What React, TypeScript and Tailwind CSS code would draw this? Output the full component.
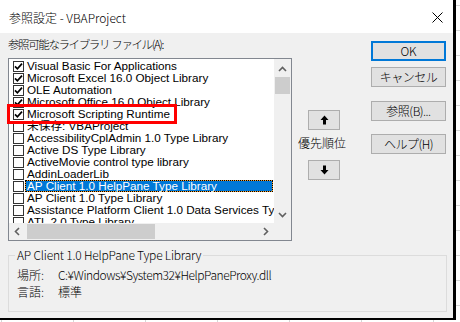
import React from "react";

const items: { label: string; checked?: boolean; selected?: boolean }[] = [
  { label: "Visual Basic For Applications", checked: true },
  { label: "Microsoft Excel 16.0 Object Library", checked: true },
  { label: "OLE Automation", checked: true },
  { label: "Microsoft Office 16.0 Object Library", checked: true },
  { label: "Microsoft Scripting Runtime", checked: true },
  { label: "未保存: VBAProject" },
  { label: "AccessibilityCplAdmin 1.0 Type Library" },
  { label: "Active DS Type Library" },
  { label: "ActiveMovie control type library" },
  { label: "AddinLoaderLib" },
  { label: "AP Client 1.0 HelpPane Type Library", selected: true },
  { label: "AP Client 1.0 Type Library" },
  { label: "Assistance Platform Client 1.0 Data Services Type Library" },
  { label: "ATL 2.0 Type Library" },
];

function Check() {
  return (
    <svg width="9" height="9" viewBox="0 0 9 9">
      <path d="M1 4.3 L3.4 6.8 L8 1.6" fill="none" stroke="#000" strokeWidth="1.7" />
    </svg>
  );
}

function Chevron({ dir }: { dir: "up" | "down" | "left" | "right" }) {
  const rot = { up: 0, down: 180, left: -90, right: 90 }[dir];
  return (
    <svg width="9" height="9" viewBox="0 0 9 9" style={{ transform: `rotate(${rot}deg)` }}>
      <path d="M1 6 L4.5 2.5 L8 6" fill="none" stroke="#606060" strokeWidth="1.6" />
    </svg>
  );
}

function Arrow({ down }: { down?: boolean }) {
  return (
    <svg width="9" height="10" viewBox="0 0 9 10" style={{ transform: down ? "rotate(180deg)" : undefined }}>
      <path d="M4.5 0.5 L8.5 5 H6 V9.5 H3 V5 H0.5 Z" fill="#000" />
    </svg>
  );
}

const ui = "font-['Noto_Sans_CJK_JP','Liberation_Sans',sans-serif] font-light";
const listFont = "font-['Liberation_Sans','Noto_Sans_CJK_JP',sans-serif] font-normal";

export default function App() {
  return (
    <div className="relative w-[460px] h-[322px] overflow-hidden bg-white bg-[linear-gradient(to_right,#d6d6d6_1px,transparent_1px),linear-gradient(to_bottom,#d6d6d6_1px,transparent_1px)] bg-[size:72px_25px] bg-[position:1px_5px]">
      <div className={`w-[456px] h-[320px] flex flex-col border-r-[3px] border-b-2 border-black ${ui} text-black`}>
        {/* title bar */}
        <div className="h-[33px] bg-white flex items-center justify-between pl-[9px] pr-[10px] pt-[2px]">
          <span className="text-[12px] leading-none text-[#000]">参照設定 - VBAProject</span>
          <svg width="11" height="11" viewBox="0 0 11 11">
            <path d="M0.5 0.5 L10.5 10.5 M10.5 0.5 L0.5 10.5" stroke="#000" strokeWidth="1" />
          </svg>
        </div>
        {/* client */}
        <div className="flex-1 bg-[#f0f0f0] flex flex-col">
          <div className="flex">
            {/* left column */}
            <div className="ml-[8px] w-[284px] flex flex-col">
              <div className="mt-[4px] h-[16px] flex items-center text-[11.5px] tracking-[-1.4px] whitespace-pre">
                参照可能なライブラリ  ファイル(A):
              </div>
              <div className="mt-[5px] h-[183px] border border-[#828790] bg-white flex flex-col">
                <div className="flex h-[164px]">
                  <div className={`w-[265px] overflow-hidden pt-px ${listFont} text-[11.7px]`}>
                    {items.map((it, i) => (
                      <div key={i} className="h-[12px] flex items-center pl-[4px] whitespace-nowrap">
                        <div className="w-[11px] h-[11px] shrink-0 border border-[#333] bg-white flex items-center justify-center">
                          {it.checked && <Check />}
                        </div>
                        {it.selected ? (
                          <div className="ml-[1px] mr-px flex-1 h-[12px] bg-[#f5a030]">
                            <div className="h-full border border-dotted border-black bg-[#0078d7] bg-clip-padding text-white pl-[1px] flex items-center leading-none">
                              {it.label}
                            </div>
                          </div>
                        ) : (
                          <div className="ml-[2px] pl-[1px] leading-none">{it.label}</div>
                        )}
                      </div>
                    ))}
                  </div>
                  {/* vertical scrollbar */}
                  <div className="w-[17px] bg-[#f0f0f0] flex flex-col">
                    <div className="h-[17px] flex items-center justify-center pt-[3px]">
                      <Chevron dir="up" />
                    </div>
                    <div className="mt-px mx-px h-[17px] bg-[#cdcdcd]" />
                    <div className="flex-1" />
                    <div className="h-[17px] flex items-center justify-center">
                      <Chevron dir="down" />
                    </div>
                  </div>
                </div>
                {/* horizontal scrollbar */}
                <div className="flex h-[17px]">
                  <div className="w-[265px] bg-[#f0f0f0] flex items-center">
                    <div className="w-[17px] h-full flex items-center justify-center">
                      <Chevron dir="left" />
                    </div>
                    <div className="ml-px h-[15px] w-[128px] bg-[#cdcdcd]" />
                    <div className="flex-1" />
                    <div className="w-[17px] h-full flex items-center justify-center">
                      <Chevron dir="right" />
                    </div>
                  </div>
                  <div className="w-[17px] bg-[#f0f0f0]" />
                </div>
              </div>
            </div>
            {/* middle column */}
            <div className="w-[79px] flex flex-col items-start pt-[77px]">
              <button className="ml-[16px] w-[32px] h-[20px] bg-[#e1e1e1] border border-[#adadad] flex items-center justify-center">
                <Arrow />
              </button>
              <div className="ml-[6px] mt-[5px] h-[16px] flex items-center text-[12px] whitespace-nowrap">優先順位</div>
              <button className="ml-[16px] mt-[9px] w-[32px] h-[20px] bg-[#e1e1e1] border border-[#adadad] flex items-center justify-center">
                <Arrow down />
              </button>
            </div>
            {/* right column */}
            <div className="flex flex-col pt-[8px] text-[12px]">
              <button className="w-[75px] h-[20px] bg-[#e1e1e1] border-2 border-[#0078d7] flex items-center justify-center leading-none">OK</button>
              <button className="mt-[6px] w-[75px] h-[20px] bg-[#e1e1e1] border border-[#adadad] flex items-center justify-center leading-none tracking-[-0.5px]">キャンセル</button>
              <button className="mt-[14px] w-[75px] h-[20px] bg-[#e1e1e1] border border-[#adadad] flex items-center justify-center leading-none tracking-[-0.5px]">参照(B)...</button>
              <button className="mt-[13px] w-[75px] h-[20px] bg-[#e1e1e1] border border-[#adadad] flex items-center justify-center leading-none tracking-[-0.5px]">ヘルプ(H)</button>
            </div>
          </div>
          {/* group box */}
          <fieldset className="ml-[8px] mt-[7px] w-[439px] border border-[#dcdcdc] pl-[6px] pb-[11px] text-[12px]">
            <legend className="px-[2px] leading-[14px] text-[12px] tracking-[-0.2px]">AP Client 1.0 HelpPane Type Library</legend>
            <div className="mt-[4px] h-[17px] flex items-center">
              <span className="w-[43px] pl-[2px]">場所:</span>
              <span className="tracking-[-0.45px]">C:¥Windows¥System32¥HelpPaneProxy.dll</span>
            </div>
            <div className="h-[17px] flex items-center">
              <span className="w-[43px] pl-[2px]">言語:</span>
              <span>標準</span>
            </div>
          </fieldset>
        </div>
      </div>
      {/* red highlight annotation */}
      <div className="absolute left-[7px] top-[104px] w-[170px] h-[20px] border-[3px] border-[#ff0000]" />
    </div>
  );
}
